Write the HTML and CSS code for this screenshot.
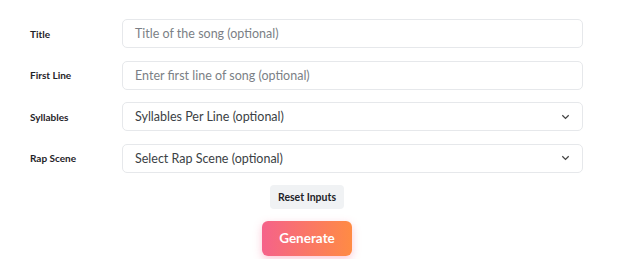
FILE: index.html
```html
<!DOCTYPE html>
<html>
<head>
<meta charset="utf-8">
<link rel="stylesheet" href="styles.css">
</head>
<body>
<form class="form">
  <div class="row">
    <label class="label">Title</label>
    <div class="field"><span class="placeholder">Title of the song (optional)</span></div>
  </div>
  <div class="row">
    <label class="label">First Line</label>
    <div class="field"><span class="placeholder">Enter first line of song (optional)</span></div>
  </div>
  <div class="row">
    <label class="label">Syllables</label>
    <div class="field select"><span class="value">Syllables Per Line (optional)</span>
      <svg class="chev" width="9" height="6" viewBox="0 0 9 6"><path d="M1.3 1.3 L4.5 4.4 L7.7 1.3" fill="none" stroke="#444" stroke-width="1.3"/></svg>
    </div>
  </div>
  <div class="row">
    <label class="label">Rap Scene</label>
    <div class="field select"><span class="value">Select Rap Scene (optional)</span>
      <svg class="chev" width="9" height="6" viewBox="0 0 9 6"><path d="M1.3 1.3 L4.5 4.4 L7.7 1.3" fill="none" stroke="#444" stroke-width="1.3"/></svg>
    </div>
  </div>
  <div class="actions">
    <button type="button" class="reset">Reset Inputs</button>
    <button type="button" class="generate">Generate</button>
  </div>
</form>
</body>
</html>
```

FILE: styles.css
```css
html, body {
  margin: 0;
  padding: 0;
  background: #ffffff;
}
body {
  font-family: "Lato", "Noto Sans", sans-serif;
  width: 624px;
  height: 259px;
  overflow: hidden;
}
.form {
  display: flex;
  flex-direction: column;
  gap: 12.5px;
  padding-top: 19px;
  width: 614px;
}
.row {
  display: flex;
  align-items: center;
}
.label {
  width: 92px;
  padding-left: 30px;
  font-size: 10px;
  font-weight: 700;
  color: #1f2328;
}
.field {
  box-sizing: border-box;
  width: 461px;
  height: 29px;
  border: 1px solid #e6e8eb;
  border-radius: 5px;
  display: flex;
  align-items: center;
  padding-left: 12px;
  padding-right: 12px;
  font-size: 12.5px;
}
.placeholder {
  color: #7b7f86;
}
.value {
  color: #3b3f45;
  flex: 1;
}
.actions {
  display: flex;
  flex-direction: column;
  align-items: center;
  gap: 12px;
  margin-top: -0.5px;
}
.reset {
  font-family: inherit;
  width: 74px;
  height: 24px;
  border: none;
  border-radius: 4px;
  background: #f0f2f4;
  color: #1f2328;
  font-size: 10.5px;
  font-weight: 700;
  padding: 0;
}
.generate {
  font-family: inherit;
  width: 90px;
  height: 35px;
  border: none;
  border-radius: 6px;
  background: linear-gradient(90deg, #f5628a 0%, #ff8b44 100%);
  color: #ffffff;
  font-size: 13.5px;
  font-weight: 700;
  padding: 0;
  box-shadow: 0 3px 8px rgba(245, 98, 138, 0.35);
}
```
